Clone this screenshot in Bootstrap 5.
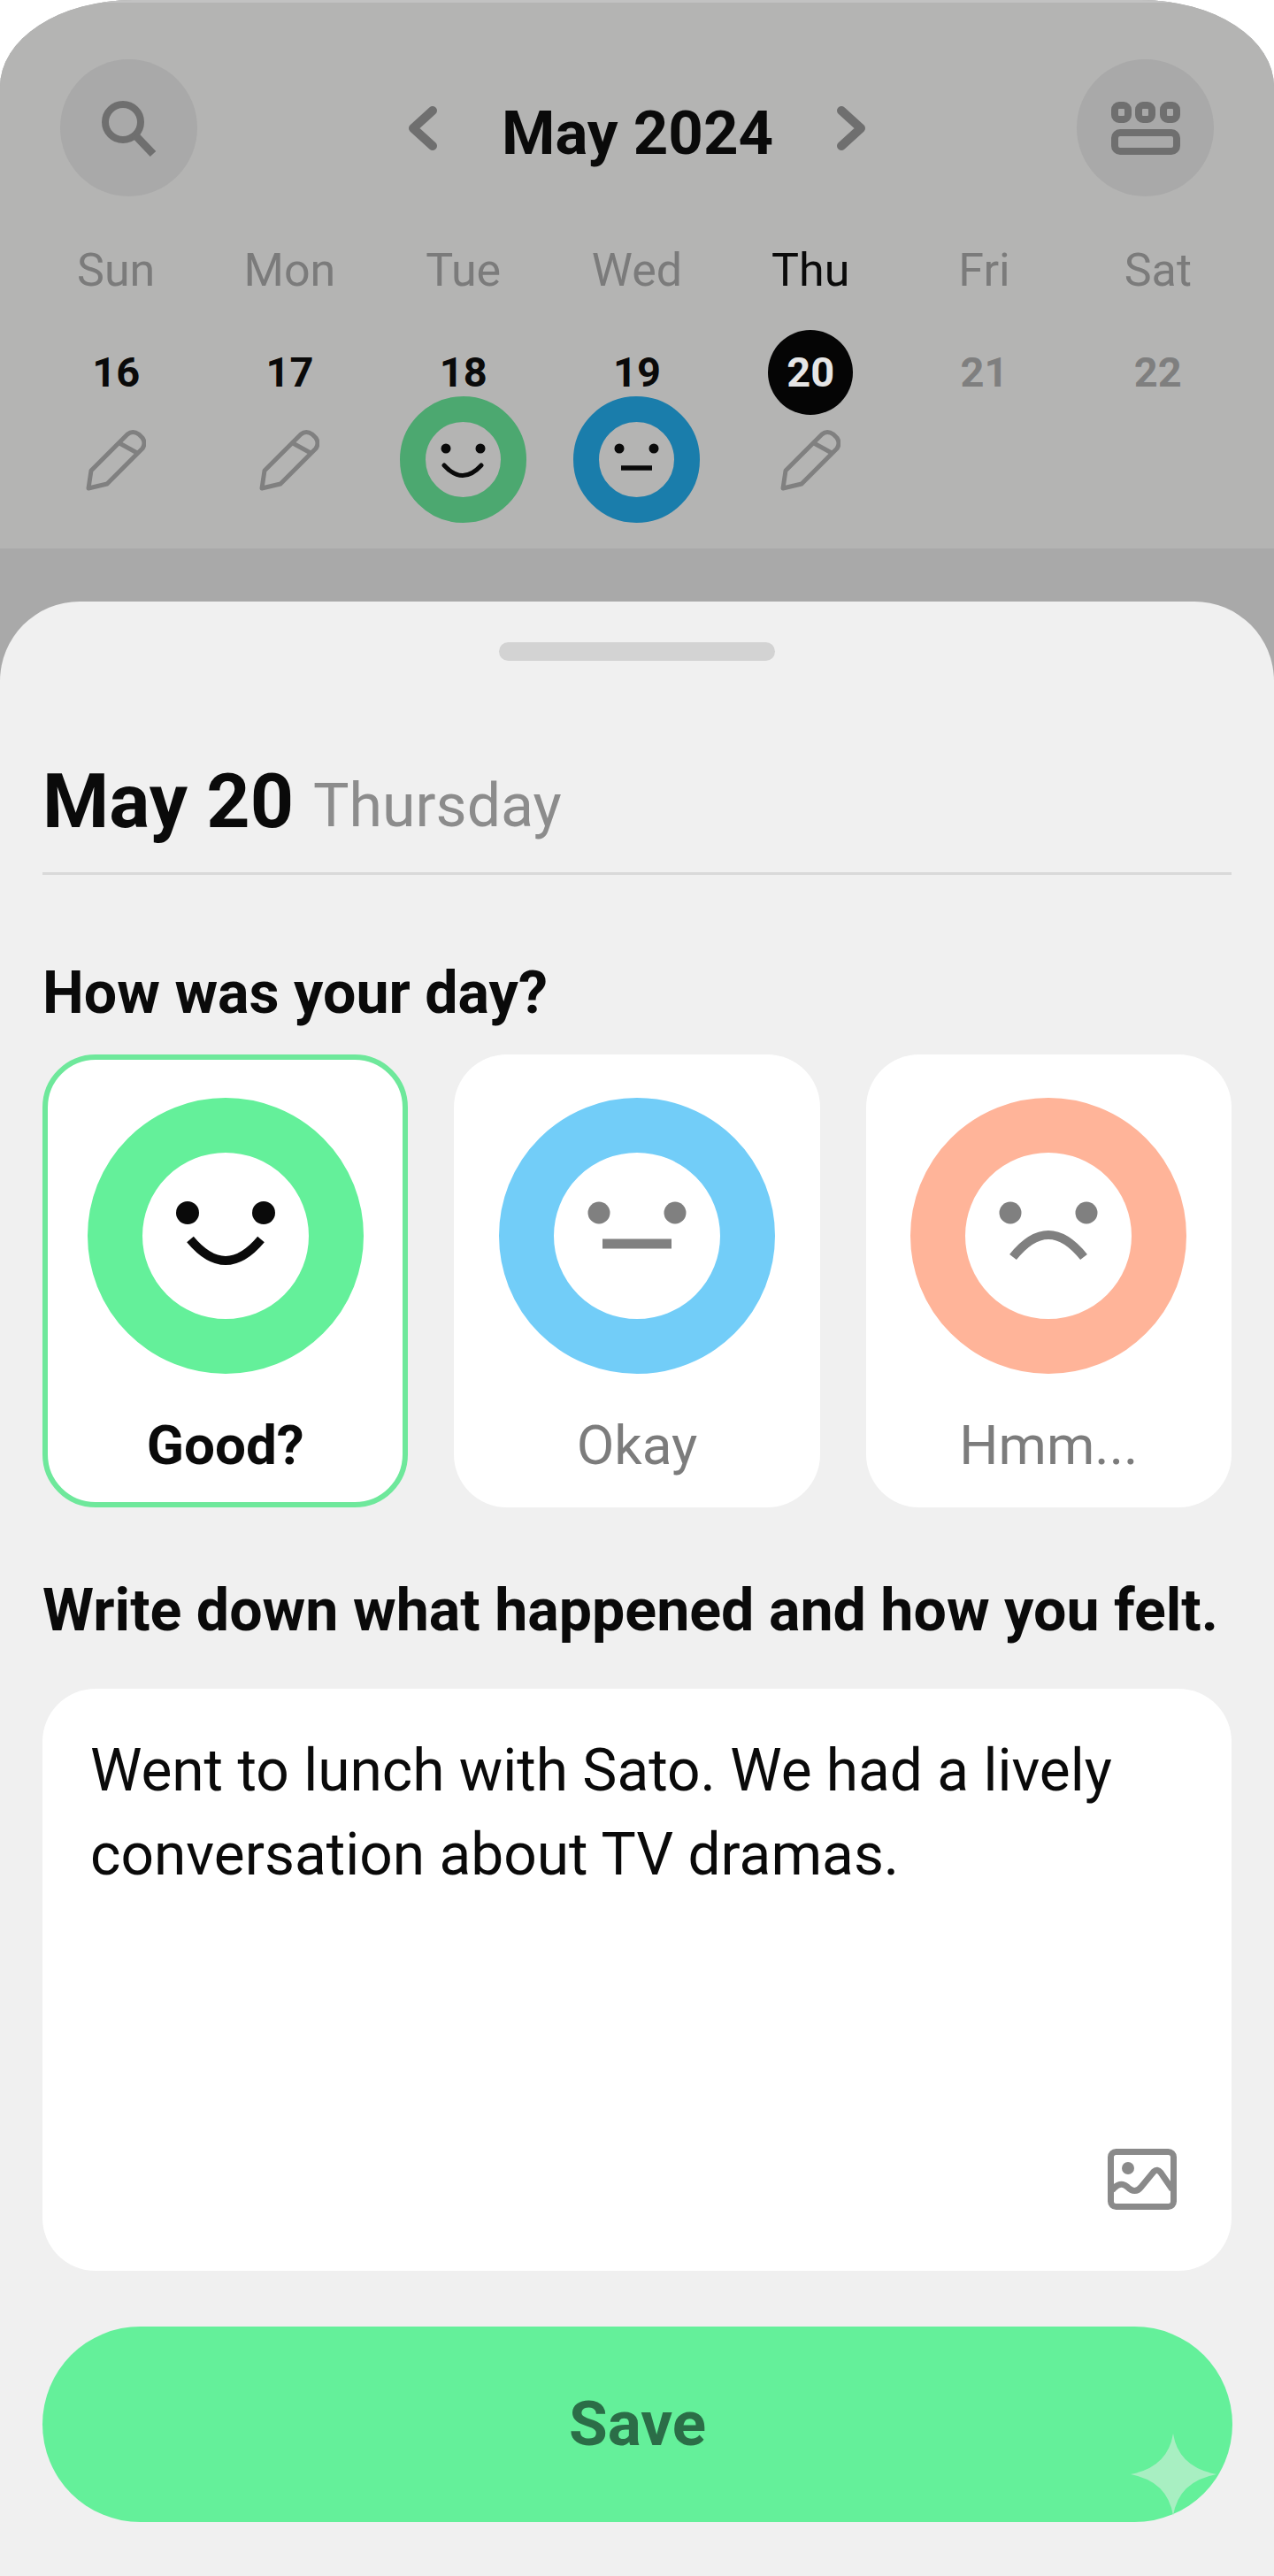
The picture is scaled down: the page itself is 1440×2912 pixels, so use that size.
<!DOCTYPE html>
<html lang="en">
<head>
    <meta charset="UTF-8">
    <meta name="viewport" content="width=device-width, initial-scale=1.0">
    <title>Mood Diary</title>
    <link href="https://cdn.jsdelivr.net/npm/bootstrap@5.3.3/dist/css/bootstrap.min.css" rel="stylesheet">
    <style>
        body { background: #fff; font-family: Roboto, "Liberation Sans", sans-serif; color: #0a0a0a; }
        .screen { width: 1440px; height: 2912px; border-radius: 150px 150px 0 0 / 98px 98px 0 0; background: #a9a9a9; overflow: hidden; }
        .cal-panel { height: 620px; background: #b4b4b3; padding: 67px 68px 0; box-shadow: inset 0 3px 0 #c2c2c2; }
        .round-btn { width: 155px; height: 155px; border-radius: 50%; background: #a9a9a9; }
        .month-title { font-size: 69px; font-weight: 700; line-height: 1; width: 306px; padding-top: 12px; white-space: nowrap; }
        .nav-head { gap: 71px; height: 155px; }
        .cal-grid { margin: 0 -35px; }
        .day-name { height: 64px; margin-top: 52px; font-size: 52px; line-height: 64px; color: #7b7b7b; }
        .day-name.today { color: #0a0a0a; }
        .day-num { height: 96px; margin-top: 35px; font-size: 47px; font-weight: 700; line-height: 96px; }
        .day-num span { display: inline-block; width: 96px; height: 96px; border-radius: 50%; }
        .day-num .off { color: #7f7f7f; }
        .day-num .cur { background: #050505; color: #e6e6e6; }
        .day-mark { height: 143px; margin-top: -21px; }
        .sheet { height: 2232px; margin-top: 60px; padding: 46px 48px 0; background: #f0f0f0; border-radius: 90px 90px 0 0; }
        .grabber { width: 312px; height: 21px; border-radius: 11px; background: #d3d3d3; }
        .date-row { height: 164px; margin-top: 78px; border-bottom: 3px solid #d9d9d9; }
        .date-main { font-size: 86px; font-weight: 700; line-height: 1; }
        .date-sub { font-size: 68px; color: #8c8c8c; line-height: 1; margin-left: 22px; padding-top: 10px; }
        .sec-title { font-size: 66.3px; font-weight: 700; line-height: 76px; white-space: nowrap; }
        .day-q { margin-top: 95px; }
        .note-q { margin-top: 78px; }
        .mood-row { gap: 52px; margin-top: 32px; }
        .mood-box { width: 414px; height: 512px; border: 0; border-radius: 60px; background: #fff; padding-top: 49px; }
        .mood-box.picked { border: 6px solid #6ee89b; padding-top: 43px; }
        .mood-name { margin-top: 45px; font-size: 62px; line-height: 72px; color: #7c7c7c; }
        .picked .mood-name { color: #0a0a0a; font-weight: 700; }
        .note-box { height: 658px; margin-top: 51px; border: 0; border-radius: 60px; background: #fff; padding: 45px 54px; }
        .note-text { font-size: 65.8px; line-height: 95px; }
        .pic-icon { right: 62px; bottom: 69px; }
        .save-btn { height: 221px; width: 1345px; margin-top: 63px; border: 0; border-radius: 111px; background: #64f09a; color: #2b6d47; font-size: 71px; font-weight: 700; }
        .save-btn:hover { background: #64f09a; color: #2b6d47; }
        .spark { right: 18px; bottom: 7px; }
    </style>
</head>
<body class="m-0">
    <div class="screen">
        <div class="cal-panel">
            <div class="d-flex justify-content-between align-items-start">
                <div class="round-btn d-flex align-items-center justify-content-center">
                    <svg width="66" height="66" viewBox="0 0 66 66" fill="none" stroke="#6f6f6f" stroke-width="8"><circle cx="26" cy="26" r="20"/><path d="M40 41 L60 62" stroke-width="9"/></svg>
                </div>
                <div class="d-flex align-items-center nav-head">
                    <svg width="36" height="52" viewBox="0 0 36 52" fill="none" stroke="#6f6f6f" stroke-width="10" stroke-linecap="round" stroke-linejoin="round"><path d="M29 6 L7 26 L29 46"/></svg>
                    <div class="month-title text-center">May 2024</div>
                    <svg width="36" height="52" viewBox="0 0 36 52" fill="none" stroke="#6f6f6f" stroke-width="10" stroke-linecap="round" stroke-linejoin="round"><path d="M7 6 L29 26 L7 46"/></svg>
                </div>
                <div class="round-btn d-flex align-items-center justify-content-center">
                    <svg width="80" height="62" viewBox="0 0 80 62" fill="none" stroke="#6f6f6f" stroke-width="8"><rect x="5" y="5" width="15" height="16" rx="5"/><rect x="32" y="5" width="15" height="16" rx="5"/><rect x="60" y="5" width="15" height="16" rx="5"/><rect x="5" y="36" width="70" height="21" rx="6"/></svg>
                </div>
            </div>
            <div class="row g-0 text-center cal-grid">
                <div class="col day-name">Sun</div>
                <div class="col day-name">Mon</div>
                <div class="col day-name">Tue</div>
                <div class="col day-name">Wed</div>
                <div class="col day-name today">Thu</div>
                <div class="col day-name">Fri</div>
                <div class="col day-name">Sat</div>
            </div>
            <div class="row g-0 text-center cal-grid">
                <div class="col day-num"><span>16</span></div>
                <div class="col day-num"><span>17</span></div>
                <div class="col day-num"><span>18</span></div>
                <div class="col day-num"><span>19</span></div>
                <div class="col day-num"><span class="cur">20</span></div>
                <div class="col day-num"><span class="off">21</span></div>
                <div class="col day-num"><span class="off">22</span></div>
            </div>
            <div class="row g-0 text-center cal-grid">
                <div class="col day-mark d-flex align-items-center justify-content-center">
                    <svg width="68" height="70" viewBox="0 0 68 70" fill="none" stroke="#808080" stroke-width="5" stroke-linejoin="round"><path d="M3 67 L6 47 L47 6 Q53 1 60 6 L64 10 Q68 16 64 22 L24 62 Z"/><path d="M38 16 L58 27" /></svg>
                </div>
                <div class="col day-mark d-flex align-items-center justify-content-center">
                    <svg width="68" height="70" viewBox="0 0 68 70" fill="none" stroke="#808080" stroke-width="5" stroke-linejoin="round"><path d="M3 67 L6 47 L47 6 Q53 1 60 6 L64 10 Q68 16 64 22 L24 62 Z"/><path d="M38 16 L58 27" /></svg>
                </div>
                <div class="col day-mark d-flex align-items-center justify-content-center">
                    <svg width="143" height="143" viewBox="0 0 143 143" fill="none"><circle cx="71.500" cy="71.500" r="57" stroke="#4ca870" stroke-width="29"/><circle cx="52" cy="59" r="5.500" fill="#0a0a0a"/><circle cx="91" cy="59" r="5.500" fill="#0a0a0a"/><path d="M50 78 Q71 101 92 78" stroke="#0a0a0a" stroke-width="5" stroke-linecap="round"/></svg>
                </div>
                <div class="col day-mark d-flex align-items-center justify-content-center">
                    <svg width="143" height="143" viewBox="0 0 143 143" fill="none"><circle cx="71.500" cy="71.500" r="57" stroke="#1a7dab" stroke-width="29"/><circle cx="52" cy="59" r="5.500" fill="#0a0a0a"/><circle cx="91" cy="59" r="5.500" fill="#0a0a0a"/><path d="M54 81 H89" stroke="#0a0a0a" stroke-width="5.500"/></svg>
                </div>
                <div class="col day-mark d-flex align-items-center justify-content-center">
                    <svg width="68" height="70" viewBox="0 0 68 70" fill="none" stroke="#808080" stroke-width="5" stroke-linejoin="round"><path d="M3 67 L6 47 L47 6 Q53 1 60 6 L64 10 Q68 16 64 22 L24 62 Z"/><path d="M38 16 L58 27" /></svg>
                </div>
                <div class="col day-mark"></div>
                <div class="col day-mark"></div>
            </div>
        </div>

        <div class="sheet position-relative">
            <div class="grabber mx-auto"></div>
            <div class="date-row d-flex align-items-center">
                <span class="date-main">May 20</span><span class="date-sub">Thursday</span>
            </div>
            <div class="sec-title day-q">How was your day?</div>
            <div class="d-flex mood-row">
                <div class="card mood-box picked text-center align-items-center">
                    <svg width="312" height="312" viewBox="0 0 312 312" fill="none"><circle cx="156" cy="156" r="125" stroke="#64f09a" stroke-width="62"/><circle cx="113" cy="130" r="13" fill="#0a0a0a"/><circle cx="199" cy="130" r="13" fill="#0a0a0a"/><path d="M116 160 Q156 208 196 160" stroke="#0a0a0a" stroke-width="10"/></svg>
                    <div class="mood-name">Good?</div>
                </div>
                <div class="card mood-box text-center align-items-center">
                    <svg width="312" height="312" viewBox="0 0 312 312" fill="none"><circle cx="156" cy="156" r="125" stroke="#72cdf8" stroke-width="62"/><circle cx="113" cy="130" r="12.500" fill="#808080"/><circle cx="199" cy="130" r="12.500" fill="#808080"/><path d="M117 165 H195" stroke="#808080" stroke-width="11"/></svg>
                    <div class="mood-name">Okay</div>
                </div>
                <div class="card mood-box text-center align-items-center">
                    <svg width="312" height="312" viewBox="0 0 312 312" fill="none"><circle cx="156" cy="156" r="125" stroke="#ffb499" stroke-width="62"/><circle cx="113" cy="130" r="12.500" fill="#808080"/><circle cx="199" cy="130" r="12.500" fill="#808080"/><path d="M116 180 Q156 130 196 180" stroke="#808080" stroke-width="10"/></svg>
                    <div class="mood-name">Hmm...</div>
                </div>
            </div>
            <div class="sec-title note-q">Write down what happened and how you felt.</div>
            <div class="card note-box position-relative">
                <div class="note-text">Went to lunch with Sato. We had a lively conversation about TV dramas.</div>
                <svg class="pic-icon position-absolute" width="78" height="69" viewBox="0 0 78 69" fill="none" stroke="#8a8a8a" stroke-width="7" stroke-linejoin="round"><rect x="3.500" y="3.500" width="71" height="62" rx="6"/><circle cx="23" cy="22" r="7" fill="#8a8a8a" stroke="none"/><path d="M5 47 Q14 36 22 43 Q31 52 38 43 L52 26 Q56 22 60 27 L73 46"/></svg>
            </div>
            <button type="button" class="btn save-btn d-block position-relative">Save
                <svg class="spark position-absolute" width="97" height="93" viewBox="0 0 97 93"><path d="M48 0 Q54 38 97 46 Q54 54 48 93 Q42 54 0 46 Q42 38 48 0 Z" fill="#a8efc2"/></svg>
            </button>
        </div>
    </div>
    <script src="https://cdn.jsdelivr.net/npm/bootstrap@5.3.3/dist/js/bootstrap.bundle.min.js"></script>
</body>
</html>
